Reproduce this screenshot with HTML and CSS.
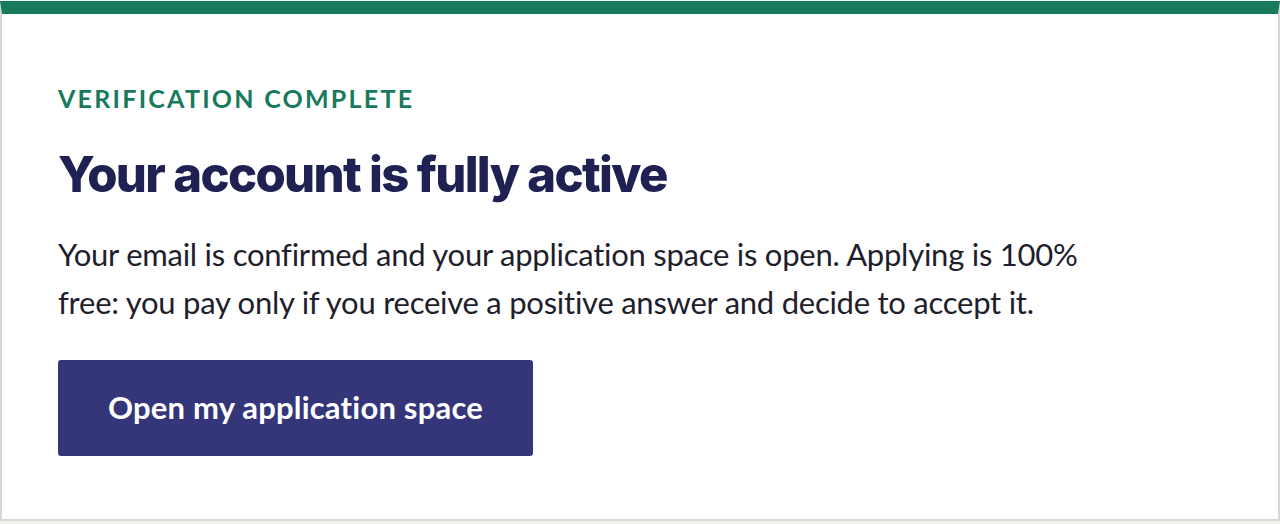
FILE: index.html
```html
<!DOCTYPE html>
<html lang="en">
<head>
<meta charset="utf-8">
<title>Verification complete</title>
<link rel="stylesheet" href="styles.css">
</head>
<body>
<main class="card">
  <p class="eyebrow">VERIFICATION COMPLETE</p>
  <h1 class="title">Your account is fully active</h1>
  <p class="lead">Your email is confirmed and your application space is open. Applying is 100% free: you pay only if you receive a positive answer and decide to accept it.</p>
  <a class="btn" href="#">Open my application space</a>
</main>
</body>
</html>
```

FILE: styles.css
```css
html, body {
  margin: 0;
  padding: 0;
}
body {
  background: #f3f3ee;
  padding-top: 1px;
  font-family: Lato, "Open Sans", sans-serif;
}
.card {
  display: flex;
  flex-direction: column;
  align-items: flex-start;
  background: #ffffff;
  border: 2px solid #d8d8d2;
  border-top: 13px solid #177a5c;
  padding: 66px 56px 63px;
}
.eyebrow {
  margin: 0;
  font-size: 25px;
  line-height: 37.5px;
  font-weight: 700;
  letter-spacing: 0.09em;
  color: #177a5c;
}
.title {
  margin: 28px 0 0;
  font-family: Inter, "Liberation Sans", sans-serif;
  font-weight: 800;
  font-size: 49px;
  line-height: 58.8px;
  letter-spacing: -0.034em;
  color: #202153;
}
.lead {
  margin: 26px 0 0;
  max-width: 1040px;
  font-size: 31px;
  line-height: 48px;
  letter-spacing: -0.25px;
  color: #1e1e2c;
}
.btn {
  margin-top: 34px;
  display: inline-block;
  padding: 23px 50px 25px;
  background: #35357a;
  color: #ffffff;
  border-radius: 3px;
  font-size: 31px;
  line-height: 48px;
  font-weight: 700;
  letter-spacing: 0.2px;
  text-decoration: none;
}
```
